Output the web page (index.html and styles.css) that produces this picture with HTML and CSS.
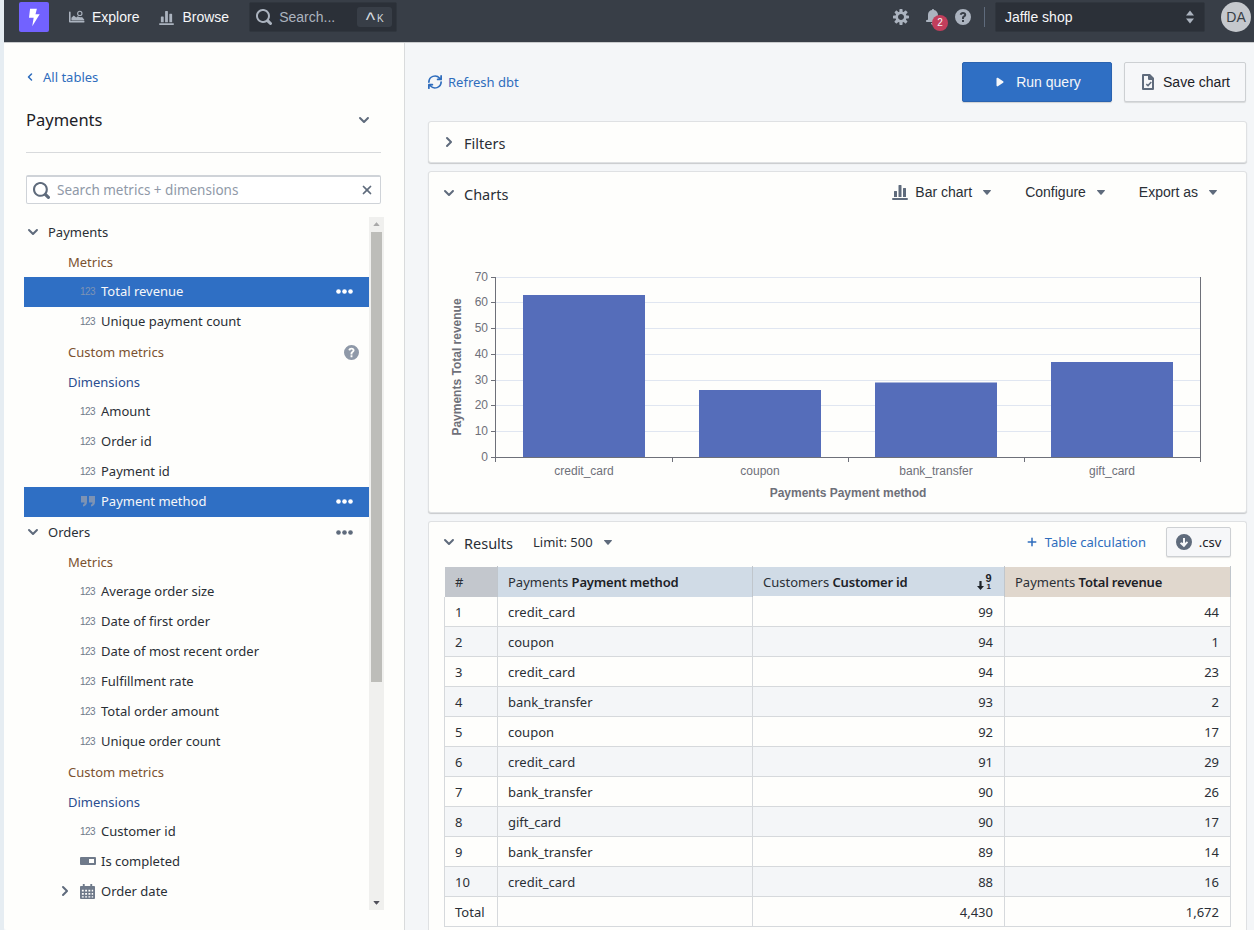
FILE: index.html
```html
<!DOCTYPE html>
<html lang="en">
<head>
<meta charset="utf-8">
<title>Explore</title>
<link rel="stylesheet" href="styles.css">
</head>
<body>
<svg class="sprite" xmlns="http://www.w3.org/2000/svg">
  <symbol id="i-down" viewBox="0 0 16 16"><path d="M12 5c-.28 0-.53.11-.71.29L8 8.59l-3.29-3.3a1.003 1.003 0 00-1.42 1.42l4 4c.18.18.43.29.71.29s.53-.11.71-.29l4-4A1.003 1.003 0 0012 5z"/></symbol>
  <symbol id="i-right" viewBox="0 0 16 16"><path d="M10.71 7.29l-4-4a1.003 1.003 0 00-1.42 1.42L8.59 8 5.3 11.29c-.19.18-.3.43-.3.71a1.003 1.003 0 001.71.71l4-4c.18-.18.29-.43.29-.71 0-.28-.11-.53-.29-.71z"/></symbol>
  <symbol id="i-left" viewBox="0 0 16 16"><path d="M5.29 7.29l4-4a1.003 1.003 0 011.42 1.42L7.41 8l3.3 3.29c.18.18.29.43.29.71a1.003 1.003 0 01-1.71.71l-4-4C5.11 8.53 5 8.28 5 8c0-.28.11-.53.29-.71z"/></symbol>
  <symbol id="i-search" viewBox="0 0 16 16"><path d="M15.55 13.43l-2.67-2.68a6.94 6.94 0 001.11-3.76c0-3.87-3.13-7-7-7s-7 3.13-7 7 3.13 7 7 7c1.39 0 2.68-.42 3.76-1.11l2.68 2.67a1.498 1.498 0 102.12-2.12zm-8.56-1.44c-2.76 0-5-2.24-5-5s2.24-5 5-5 5 2.24 5 5-2.24 5-5 5z"/></symbol>
  <symbol id="i-caret" viewBox="0 0 16 16"><path d="M12 6.5c0-.28-.22-.5-.5-.5h-7a.495.495 0 00-.37.83l3.5 4c.09.1.22.17.37.17s.28-.07.37-.17l3.5-4c.08-.09.13-.2.13-.33z"/></symbol>
  <symbol id="i-cross" viewBox="0 0 16 16"><path d="M9.41 8l3.29-3.29c.19-.18.3-.43.3-.71a1.003 1.003 0 00-1.71-.71L8 6.59l-3.29-3.3a1.003 1.003 0 00-1.42 1.42L6.59 8 3.3 11.29c-.19.18-.3.43-.3.71a1.003 1.003 0 001.71.71L8 9.41l3.29 3.29c.18.19.43.3.71.3a1.003 1.003 0 00.71-1.71L9.41 8z"/></symbol>
  <symbol id="i-play" viewBox="0 0 16 16"><path d="M12 8c0-.35-.19-.64-.46-.82l.01-.02-6-4-.01.02A.969.969 0 005 3c-.55 0-1 .45-1 1v8c0 .55.45 1 1 1 .21 0 .39-.08.54-.18l.01.02 6-4-.01-.02c.27-.18.46-.47.46-.82z"/></symbol>
  <symbol id="i-more" viewBox="0 0 17 5"><circle cx="2.500" cy="2.500" r="2.300"/><circle cx="8.500" cy="2.500" r="2.300"/><circle cx="14.500" cy="2.500" r="2.300"/></symbol>
  <symbol id="i-help" viewBox="0 0 16 16"><path fill-rule="evenodd" d="M8 0a8 8 0 100 16A8 8 0 008 0zM7 11h2v2H7v-2zm1-8c1.9 0 3.2 1.1 3.2 2.7 0 1.1-.6 1.8-1.4 2.3-.6.4-.8.7-.8 1.3V10H7v-.9c0-1.2.6-1.9 1.5-2.5.5-.3.7-.5.7-.9 0-.5-.5-.8-1.2-.8-.8 0-1.3.4-1.5 1.1L4.7 5.4C5.1 3.9 6.3 3 8 3z"/></symbol>
  <symbol id="i-cog" viewBox="0 0 16 16"><path d="M15.19 6.39h-1.85c-.11-.37-.27-.71-.45-1.04l1.36-1.36c.31-.31.31-.82 0-1.13l-1.13-1.13a.803.803 0 00-1.13 0l-1.36 1.36c-.33-.17-.67-.33-1.04-.44V.79c0-.44-.36-.8-.8-.8h-1.6c-.44 0-.8.36-.8.8v1.86c-.39.12-.75.28-1.1.47l-1.3-1.3c-.3-.3-.79-.3-1.09 0L1.82 2.91c-.3.3-.3.79 0 1.09l1.3 1.3c-.2.35-.36.72-.48 1.11H.79c-.44 0-.8.36-.8.8v1.6c0 .44.36.8.8.8h1.85c.11.37.27.71.45 1.04l-1.36 1.36c-.31.31-.31.82 0 1.13l1.13 1.13c.31.31.82.31 1.13 0l1.36-1.36c.33.18.67.33 1.04.44v1.86c0 .44.36.8.8.8h1.6c.44 0 .8-.36.8-.8v-1.86c.39-.12.75-.28 1.1-.47l1.3 1.3c.3.3.79.3 1.09 0l1.09-1.09c.3-.3.3-.79 0-1.09l-1.3-1.3c.19-.35.36-.72.48-1.11h1.85c.44 0 .8-.36.8-.8v-1.6a.816.816 0 00-.81-.79zM8 11c-1.66 0-3-1.34-3-3s1.34-3 3-3 3 1.34 3 3-1.34 3-3 3z"/></symbol>
  <symbol id="i-bell" viewBox="0 0 16 16"><path d="M8 16c1.1 0 2-.9 2-2H6c0 1.1.9 2 2 2zm6-5c-.55 0-1-.45-1-1V6c0-2.43-1.73-4.45-4.02-4.9 0-.04.02-.06.02-.1 0-.55-.45-1-1-1S7 .45 7 1c0 .04.02.06.02.1A4.992 4.992 0 003 6v4c0 .55-.45 1-1 1s-1 .45-1 1 .45 1 1 1h12c.55 0 1-.45 1-1s-.45-1-1-1z"/></symbol>
  <symbol id="i-bars" viewBox="0 0 16 16"><path d="M1 14h14a1 1 0 010 2H1a1 1 0 010-2zM2.5 7h2a.5.5 0 01.5.5V13H2V7.5a.5.5 0 01.5-.5zm4.5-6h2a.5.5 0 01.5.5V13h-3V1.5A.5.5 0 017 1zm4.500 3h2a.5.5 0 01.5.5V13h-3V4.500a.5.5 0 01.5-.5z"/></symbol>
  <symbol id="i-explore" viewBox="0 0 20 16"><path d="M1 1a1 1 0 011 1v11h16.500a1 1 0 010 2H1a1 1 0 01-1-1V2a1 1 0 011-1z"/><path d="M3 12.500V9l3-3 3 2.500 2-1.500c1.300 1.300 3.500 1.700 5.300 1L19 11v1.500H3z"/><circle cx="13.500" cy="3.500" r="2.700" fill="none" stroke="currentColor" stroke-width="1.400"/></symbol>
  <symbol id="i-doc" viewBox="0 0 16 16"><path fill-rule="evenodd" d="M3 0h7l4 4v11a1 1 0 01-1 1H3a1 1 0 01-1-1V1a1 1 0 011-1zm1 2v12h8V6H9a1 1 0 01-1-1V2H4zm6.800 5.600l1 .9-3.700 4.200-2.300-2 1-1.100 1.100 1z"/></symbol>
  <symbol id="i-download" viewBox="0 0 16 16"><path fill-rule="evenodd" d="M8 0a8 8 0 100 16A8 8 0 008 0zM7 4h2v5l1.800-1.700 1.300 1.300L8 13.200 3.900 9.600l1.300-1.300L7 9V4z"/></symbol>
  <symbol id="i-quote" viewBox="0 0 16 16"><path d="M1 3h6v6c0 2.500-1.500 4-4 4.500v-2c1-.3 1.500-1 1.500-2H1V3zm8 0h6v6c0 2.500-1.500 4-4 4.500v-2c1-.3 1.500-1 1.500-2H9V3z"/></symbol>
  <symbol id="i-toggle" viewBox="0 0 16 8"><path fill-rule="evenodd" d="M1 0h14a1 1 0 011 1v6a1 1 0 01-1 1H1a1 1 0 01-1-1V1a1 1 0 011-1zm8 2v4h5V2H9z"/></symbol>
  <symbol id="i-cal" viewBox="0 0 16 16"><path fill-rule="evenodd" d="M3 0h2v2h6V0h2v2h2a1 1 0 011 1v12a1 1 0 01-1 1H1a1 1 0 01-1-1V3a1 1 0 011-1h2V0zM2 6v2h2V6H2zm3.500 0v2h2V6h-2zm3.500 0v2h2V6H9zm3.500 0v2H14V6h-1.500zM2 9.500v2h2v-2H2zm3.500 0v2h2v-2h-2zm3.500 0v2h2v-2H9zm3.500 0v2H14v-2h-1.500zM2 13v1.500h2V13H2zm3.500 0v1.500h2V13h-2zM9 13v1.500h2V13H9zm3.500 0v1.500H14V13h-1.500z"/></symbol>
  <symbol id="i-plus" viewBox="0 0 16 16"><path d="M13 7H9V3a1 1 0 00-2 0v4H3a1 1 0 000 2h4v4a1 1 0 002 0V9h4a1 1 0 000-2z"/></symbol>
  <symbol id="i-refresh" viewBox="0 0 16 16"><path d="M15 7a1 1 0 00-1 1 6 6 0 01-10.470 4H5a1 1 0 000-2H1a1 1 0 00-1 1v4a1 1 0 002 0v-2.050A8 8 0 0016 8a1 1 0 00-1-1zM1 9a1 1 0 001-1 6 6 0 0110.470-4H11a1 1 0 000 2h4a1 1 0 001-1V1a1 1 0 00-2 0v2.050A8 8 0 000 8a1 1 0 001 1z"/></symbol>
  <symbol id="i-updown" viewBox="0 0 16 16"><path d="M4 6.500l4-5 4 5H4zm0 3l4 5 4-5H4z"/></symbol>
  <symbol id="i-bolt" viewBox="0 0 16 20"><path d="M3.500 0h7.800l-1.600 6.200h4.800L6 20l1.600-9.800H2.300L3.500 0z"/></symbol>
  <symbol id="i-arrow" viewBox="0 0 7 9"><path d="M2.400 0h2.200v5H7L3.500 9 0 5h2.400z"/></symbol>
</svg>

<div class="app">
  <header class="topbar">
    <div class="logo"><svg class="ic-logo"><use href="#i-bolt"/></svg></div>
    <a class="nav-item"><svg class="ic-explore"><use href="#i-explore"/></svg>Explore</a>
    <a class="nav-item nav-browse"><svg class="ic-15"><use href="#i-bars"/></svg>Browse</a>
    <div class="global-search">
      <svg class="ic-16"><use href="#i-search"/></svg>
      <span class="gs-text">Search...</span>
      <span class="kbd"><span class="kbd-hat">^</span><span class="kbd-k">K</span></span>
    </div>
    <div class="top-right">
      <svg class="ic-16 ic-top"><use href="#i-cog"/></svg>
      <span class="bell"><svg class="ic-16 ic-top"><use href="#i-bell"/></svg><span class="badge">2</span></span>
      <svg class="ic-16 ic-top"><use href="#i-help"/></svg>
      <span class="top-sep"></span>
      <div class="project">Jaffle shop<svg class="ic-16 ic-top"><use href="#i-updown"/></svg></div>
      <div class="avatar">DA</div>
    </div>
  </header>

  <div class="body-row">
    <aside class="sidebar">
      <div class="side-head">
        <a class="back"><svg class="ic-12"><use href="#i-left"/></svg>All tables</a>
        <div class="table-title"><h1>Payments</h1><svg class="ic-16 ic-grey"><use href="#i-down"/></svg></div>
        <div class="divider"></div>
        <div class="side-search">
          <svg class="ic-17 ic-grey"><use href="#i-search"/></svg>
          <span class="ss-text">Search metrics + dimensions</span>
          <svg class="ic-14 ic-grey"><use href="#i-cross"/></svg>
        </div>
      </div>
      <div class="tree-wrap">
        <div class="tree">
          <div class="row group"><svg class="ic-16 ic-grey"><use href="#i-down"/></svg><span>Payments</span></div>
          <div class="row sec metric">Metrics</div>
          <div class="row item selected"><span class="num">123</span><span class="lbl">Total revenue</span><svg class="ic-more"><use href="#i-more"/></svg></div>
          <div class="row item"><span class="num">123</span><span class="lbl">Unique payment count</span></div>
          <div class="row sec metric">Custom metrics<svg class="ic-help"><use href="#i-help"/></svg></div>
          <div class="row sec dim">Dimensions</div>
          <div class="row item"><span class="num">123</span><span class="lbl">Amount</span></div>
          <div class="row item"><span class="num">123</span><span class="lbl">Order id</span></div>
          <div class="row item"><span class="num">123</span><span class="lbl">Payment id</span></div>
          <div class="row item selected"><svg class="ic-type ic-quote"><use href="#i-quote"/></svg><span class="lbl">Payment method</span><svg class="ic-more"><use href="#i-more"/></svg></div>
          <div class="row group"><svg class="ic-16 ic-grey"><use href="#i-down"/></svg><span>Orders</span><svg class="ic-more ic-more-dark"><use href="#i-more"/></svg></div>
          <div class="row sec metric">Metrics</div>
          <div class="row item"><span class="num">123</span><span class="lbl">Average order size</span></div>
          <div class="row item"><span class="num">123</span><span class="lbl">Date of first order</span></div>
          <div class="row item"><span class="num">123</span><span class="lbl">Date of most recent order</span></div>
          <div class="row item"><span class="num">123</span><span class="lbl">Fulfillment rate</span></div>
          <div class="row item"><span class="num">123</span><span class="lbl">Total order amount</span></div>
          <div class="row item"><span class="num">123</span><span class="lbl">Unique order count</span></div>
          <div class="row sec metric">Custom metrics</div>
          <div class="row sec dim">Dimensions</div>
          <div class="row item"><span class="num">123</span><span class="lbl">Customer id</span></div>
          <div class="row item"><svg class="ic-type ic-toggle"><use href="#i-toggle"/></svg><span class="lbl">Is completed</span></div>
          <div class="row item item-exp"><svg class="ic-exp"><use href="#i-right"/></svg><svg class="ic-type ic-cal"><use href="#i-cal"/></svg><span class="lbl">Order date</span></div>
        </div>
        <div class="scrollbar">
          <svg class="sb-arrow"><use href="#i-caret" transform="rotate(180 6 6)"/></svg>
          <div class="sb-track"><div class="sb-thumb"></div></div>
          <svg class="sb-arrow"><use href="#i-caret"/></svg>
        </div>
      </div>
    </aside>

    <main class="main">
      <div class="actions">
        <a class="refresh"><svg class="ic-14"><use href="#i-refresh"/></svg>Refresh dbt</a>
        <button class="btn btn-primary"><svg class="ic-14"><use href="#i-play"/></svg>Run query</button>
        <button class="btn btn-default"><svg class="ic-16 ic-grey"><use href="#i-doc"/></svg>Save chart</button>
      </div>

      <section class="card card-filters">
        <svg class="ic-16 ic-grey"><use href="#i-right"/></svg><span class="card-title">Filters</span>
      </section>

      <section class="card card-charts">
        <div class="charts-head">
          <svg class="ic-16 ic-grey"><use href="#i-down"/></svg><span class="card-title">Charts</span>
          <div class="chart-tools">
            <span class="tool"><svg class="ic-16 ic-grey"><use href="#i-bars"/></svg>Bar chart<svg class="ic-16 ic-grey"><use href="#i-caret"/></svg></span>
            <span class="tool">Configure<svg class="ic-16 ic-grey"><use href="#i-caret"/></svg></span>
            <span class="tool">Export as<svg class="ic-16 ic-grey"><use href="#i-caret"/></svg></span>
          </div>
        </div>
        <svg class="chart" viewBox="429 213 817 298" width="817" height="298">
          <g class="grid">
            <path d="M496 277.500H1200M496 302.500H1200M496 328.500H1200M496 354.500H1200M496 380.500H1200M496 405.500H1200M496 431.500H1200"/>
          </g>
          <g class="bars">
            <rect x="523" y="295" width="122" height="162"/>
            <rect x="699" y="390" width="122" height="67"/>
            <rect x="875" y="382.500" width="122" height="74.500"/>
            <rect x="1051" y="362" width="122" height="95"/>
          </g>
          <path class="axis" d="M495.500 277V462M491 277.500H496M491 302.500H496M491 328.500H496M491 354.500H496M491 380.500H496M491 405.500H496M491 431.500H496M491 457.500H1200.500M672.500 457V462M848.500 457V462M1024.500 457V462M1200.500 277V462"/>
          <g class="ticks">
            <text x="488" y="281" text-anchor="end">70</text>
            <text x="488" y="306" text-anchor="end">60</text>
            <text x="488" y="332" text-anchor="end">50</text>
            <text x="488" y="358" text-anchor="end">40</text>
            <text x="488" y="384" text-anchor="end">30</text>
            <text x="488" y="409" text-anchor="end">20</text>
            <text x="488" y="435" text-anchor="end">10</text>
            <text x="488" y="461" text-anchor="end">0</text>
            <text x="584" y="475" text-anchor="middle">credit_card</text>
            <text x="760" y="475" text-anchor="middle">coupon</text>
            <text x="936" y="475" text-anchor="middle">bank_transfer</text>
            <text x="1112" y="475" text-anchor="middle">gift_card</text>
          </g>
          <text class="axis-name" x="848" y="497" text-anchor="middle">Payments Payment method</text>
          <text class="axis-name" transform="translate(461 367) rotate(-90)" text-anchor="middle">Payments Total revenue</text>
        </svg>
      </section>

      <section class="card card-results">
        <div class="results-head">
          <svg class="ic-16 ic-grey"><use href="#i-down"/></svg><span class="card-title">Results</span>
          <span class="limit">Limit: 500<svg class="ic-16 ic-grey"><use href="#i-caret"/></svg></span>
          <a class="tablecalc"><svg class="ic-12"><use href="#i-plus"/></svg>Table calculation</a>
          <button class="btn-csv"><svg class="ic-16 ic-grey"><use href="#i-download"/></svg>.csv</button>
        </div>
        <table class="results">
          <colgroup><col class="c1"><col class="c2"><col class="c3"><col class="c4"></colgroup>
          <thead>
            <tr>
              <th class="th-idx">#</th>
              <th class="th-dim">Payments <b>Payment method</b></th>
              <th class="th-dim th-sort">Customers <b>Customer id</b><span class="sort"><svg class="sort-arrow"><use href="#i-arrow"/></svg><span class="sort-nums"><b>9</b><b>1</b></span></span></th>
              <th class="th-met">Payments <b>Total revenue</b></th>
            </tr>
          </thead>
          <tbody>
            <tr><td>1</td><td>credit_card</td><td class="n">99</td><td class="n">44</td></tr>
            <tr><td>2</td><td>coupon</td><td class="n">94</td><td class="n">1</td></tr>
            <tr><td>3</td><td>credit_card</td><td class="n">94</td><td class="n">23</td></tr>
            <tr><td>4</td><td>bank_transfer</td><td class="n">93</td><td class="n">2</td></tr>
            <tr><td>5</td><td>coupon</td><td class="n">92</td><td class="n">17</td></tr>
            <tr><td>6</td><td>credit_card</td><td class="n">91</td><td class="n">29</td></tr>
            <tr><td>7</td><td>bank_transfer</td><td class="n">90</td><td class="n">26</td></tr>
            <tr><td>8</td><td>gift_card</td><td class="n">90</td><td class="n">17</td></tr>
            <tr><td>9</td><td>bank_transfer</td><td class="n">89</td><td class="n">14</td></tr>
            <tr><td>10</td><td>credit_card</td><td class="n">88</td><td class="n">16</td></tr>
          </tbody>
          <tfoot>
            <tr><td>Total</td><td></td><td class="n">4,430</td><td class="n">1,672</td></tr>
          </tfoot>
        </table>
      </section>
    </main>
  </div>
</div>
</body>
</html>
```
FILE: styles.css
```css
* { box-sizing: border-box; }
html, body { margin: 0; height: 930px; overflow: hidden; }
body {
  background: #e6edf2;
  padding-left: 4px;
  font-family: "Noto Sans", sans-serif;
  font-size: 13px;
  color: #1c2127;
}
.sprite { display: none; }
svg { fill: currentColor; flex: none; display: block; }
.ic-12 { width: 12px; height: 12px; }
.ic-14 { width: 14px; height: 14px; }
.ic-15 { width: 15px; height: 15px; }
.ic-16 { width: 16px; height: 16px; }
.ic-17 { width: 17px; height: 17px; }
.ic-grey { color: #5f6b7c; }
a { text-decoration: none; }

.app { display: flex; flex-direction: column; height: 930px; }

/* top bar */
.topbar {
  height: 43px;
  background: #383e47;
  border-bottom: 1px solid #c9cbcd;
  display: flex;
  align-items: center;
  padding: 0 3px 8px 15px;
  font-family: "Liberation Sans", sans-serif;
  font-size: 14px;
  color: #f6f7f9;
}
.logo {
  width: 30px; height: 30px;
  background: #7262ff;
  border-radius: 2px;
  margin-right: 20px;
  display: flex; align-items: center; justify-content: center;
}
.ic-logo { width: 14px; height: 19px; color: #fff; }
.nav-item { display: flex; align-items: center; gap: 7px; color: #f6f7f9; }
.nav-item svg { color: #abb3bf; }
.ic-explore { width: 16px; height: 14px; }
.nav-browse { margin-left: 20px; gap: 8px; }
.global-search {
  width: 148px; height: 30px;
  margin-left: 20px;
  background: #2b3038;
  border: 1px solid #30363e;
  border-radius: 2px;
  display: flex; align-items: center;
  padding: 0 4px 0 6px;
  color: #abb3bf;
}
.gs-text { margin-left: 7px; flex: 1; }
.kbd {
  width: 35px; height: 20px;
  background: #383e47;
  border-radius: 3px;
  display: flex; justify-content: center; gap: 2px;
  color: #d3d8de;
  margin-top: -1px;
}
.kbd-hat { font-size: 20px; line-height: 26px; }
.kbd-k { font-size: 10px; line-height: 24px; }
.top-right { margin-left: auto; display: flex; align-items: center; }
.ic-top { color: #abb3bf; }
.bell { position: relative; margin-left: 16px; margin-right: 14px; }
.badge {
  position: absolute; left: 7px; top: 6px;
  width: 16px; height: 16px;
  background: #c23e5c;
  border-radius: 50%;
  color: #f6f7f9;
  font-size: 10px;
  text-align: center;
  line-height: 16px;
}
.top-sep { width: 1px; height: 20px; background: #5f6b7c; margin: 0 10px 0 13px; }
.project {
  width: 210px; height: 30px;
  background: #2b3038;
  border: 1px solid #30363e;
  border-radius: 2px;
  display: flex; align-items: center; justify-content: space-between;
  padding: 0 6px 0 9px;
  color: #f6f7f9;
}
.avatar {
  width: 30px; height: 30px;
  margin-left: 16px;
  border-radius: 50%;
  background: #c5c8cd;
  color: #383e47;
  text-align: center;
  line-height: 30px;
}

.body-row { flex: 1; display: flex; min-height: 0; background: #f4f6f8; }

/* sidebar */
.sidebar {
  width: 401px;
  background: #fefefc;
  border-right: 1px solid #d9dbdc;
  border-bottom-left-radius: 3px;
  padding: 24px 20px 0 20px;
  flex: none;
}
.side-head { margin: 0 3px 0 2px; }
.back { display: flex; align-items: center; height: 20px; color: #2f6dbd; gap: 7px; margin-left: -2px; }
.table-title {
  display: flex; align-items: center; justify-content: space-between;
  height: 30px;
  margin-top: 18px;
  padding-right: 9px;
}
h1 { margin: 0; font-size: 16.5px; font-weight: 400; line-height: 30px; }
.divider { height: 1px; background: #d8dadc; margin-top: 17px; }
.side-search {
  height: 29px;
  margin-top: 22px;
  background: #fff;
  border: 1px solid #cfd3d8;
  border-top-width: 2px;
  border-radius: 2px;
  display: flex; align-items: center;
  padding: 0 6px;
  color: #8f99a8;
  font-size: 13.5px;
}
.ss-text { flex: 1; margin-left: 7px; padding-bottom: 1px; }
.tree-wrap { display: flex; margin-top: 13px; height: 693px; }
.tree { flex: 1; overflow: hidden; color: #2a2f36; }
.row { height: 30px; display: flex; align-items: center; padding-right: 16px; position: relative; }
.group { padding-left: 1px; gap: 7px; }
.group .ic-more { margin-left: auto; }
.sec { padding-left: 44px; padding-right: 10px; justify-content: space-between; }
.metric { color: #7b5230; }
.dim { color: #2a4d8f; }
.item { padding-left: 56px; padding-bottom: 2px; }
.num { width: 21px; font: 10px "Liberation Sans", sans-serif; letter-spacing: -.5px; color: #6f7a8a; }
.lbl { color: #2a2f36; }
.selected { background: #2f6fc4; }
.selected .lbl { color: #f6f7f9; }
.selected .num { color: #7d93b4; }
.selected .ic-more { margin-left: auto; }
.ic-more { width: 17px; height: 5px; color: #fff; }
.ic-more-dark { color: #5f6b7c; }
.ic-help { width: 15px; height: 15px; color: #8f99a8; }
.ic-type { color: #6f7a8a; margin-right: 5px; }
.ic-quote { width: 16px; height: 16px; color: #7d93b4; }
.ic-toggle { width: 16px; height: 8px; }
.ic-cal { width: 15px; height: 15px; margin-right: 6px; }
.item-exp { padding-left: 33px; }
.ic-exp { width: 16px; height: 16px; color: #5f6b7c; margin-right: 7px; }

.scrollbar { width: 15px; background: #f0f0ee; display: flex; flex-direction: column; color: #a0a0a0; }
.sb-arrow { width: 15px; height: 15px; padding: 1.500px; color: #a9a9a9; }
.scrollbar .sb-arrow:last-child { color: #50505a; }
.sb-track { flex: 1; padding: 0 2px; }
.sb-thumb { height: 450px; background: #bdbdb9; }

/* main */
.main { flex: 1; min-width: 0; padding: 19px 7px 0 23px; }
.actions { display: flex; align-items: center; height: 40px; padding-right: 1px; }
.refresh { display: flex; align-items: center; gap: 6px; color: #2f6dbd; margin-right: auto; }
.btn {
  height: 40px;
  border-radius: 2px;
  font-family: "Liberation Sans", sans-serif;
  font-size: 14px;
  display: flex; align-items: center; justify-content: center;
  cursor: pointer;
}
.btn-primary {
  width: 150px;
  gap: 9px;
  background: #2f6fc4;
  border: 1px solid #2a63b0;
  color: #f6f7f9;
  box-shadow: 0 1px 1px rgba(0,0,0,.15);
}
.btn-default {
  width: 122px;
  margin-left: 12px;
  gap: 7px;
  background: #f6f7f9;
  border: 1px solid #cdd0d3;
  color: #1c2127;
  box-shadow: 0 1px 1px rgba(0,0,0,.12);
}
.card {
  background: #fefefc;
  border: 1px solid #dfe1e3;
  border-radius: 3px;
  box-shadow: 0 1px 1px rgba(0,0,0,.18);
}
.card-title { font-size: 14.5px; margin-left: 7px; color: #2a2f36; padding-top: 2px; }
.card-filters {
  height: 42px;
  margin-top: 19px;
  display: flex; align-items: center;
  padding-left: 12px;
}
.card-charts { height: 342px; margin-top: 8px; }
.charts-head { display: flex; align-items: center; height: 41px; padding: 0 25px 0 12px; }
.chart-tools { margin-left: auto; display: flex; gap: 30px; font-family: "Liberation Sans", sans-serif; font-size: 14px; color: #2a2f36; margin-top: -2px; }
.tool { display: flex; align-items: center; gap: 7px; }
.grid path { fill: none; stroke: #e0e6f1; stroke-width: 1; }
.bars rect { fill: #556dba; }
.axis { fill: none; stroke: #6e7079; stroke-width: 1; }
.ticks text { fill: #6e7079; font: 12px "Liberation Sans", sans-serif; }
.axis-name { fill: #6e7079; font: bold 12px "Liberation Sans", sans-serif; }

.card-results { margin-top: 8px; padding: 0 15px; height: 420px; box-shadow: none; border-bottom: 0; }
.results-head { display: flex; align-items: center; height: 44px; padding-bottom: 4px; }
.results-head > .ic-16:first-child { margin-left: -3px; }
.limit { display: flex; align-items: center; margin-left: 20px; gap: 7px; color: #2a2f36; }
.tablecalc { display: flex; align-items: center; gap: 7px; color: #2f6dbd; margin-left: auto; }
.btn-csv {
  height: 30px; width: 65px;
  margin-left: 20px;
  background: #f6f7f9;
  border: 1px solid #cdd0d3;
  border-radius: 2px;
  box-shadow: 0 1px 1px rgba(0,0,0,.1);
  display: flex; align-items: center; justify-content: center; gap: 7px;
  font: 13px "Noto Sans", sans-serif;
  color: #1c2127;
}
.results { border-collapse: collapse; table-layout: fixed; width: 786px; font-size: 13px; color: #2a2f36; }
.c1 { width: 53px; } .c2 { width: 255px; } .c3 { width: 252px; } .c4 { width: 226px; }
.results th { height: 30px; padding: 0 11px 0 10px; text-align: left; font-weight: 400; border: 1px solid transparent; border-right-color: #c0c6cc; }
.results th b { font-weight: 600; color: #1c2127; letter-spacing: -.2px; }
.th-idx { background: #c3c7cd; }
.th-dim { background: #d0dbe6; }
.th-met { background: #e0d7cd; }
.th-sort { position: relative; }
.sort { position: absolute; right: 12px; top: 6px; display: flex; align-items: flex-end; gap: 1px; color: #1c2127; font-family: "Liberation Sans", sans-serif; }
.sort-arrow { width: 7px; height: 9px; }
.sort-nums { display: flex; flex-direction: column; align-items: center; width: 7px; }
.sort-nums b { font-size: 11px; line-height: 10px; font-weight: 700; letter-spacing: 0; }
.sort-nums b:last-child { font-size: 8px; line-height: 7px; }
.results td { height: 30px; padding: 0 11px 0 10px; border: 1px solid #d6d9dc; }
.results tbody tr:nth-child(even) { background: #f4f6f8; }
.results td.n { text-align: right; }
```
